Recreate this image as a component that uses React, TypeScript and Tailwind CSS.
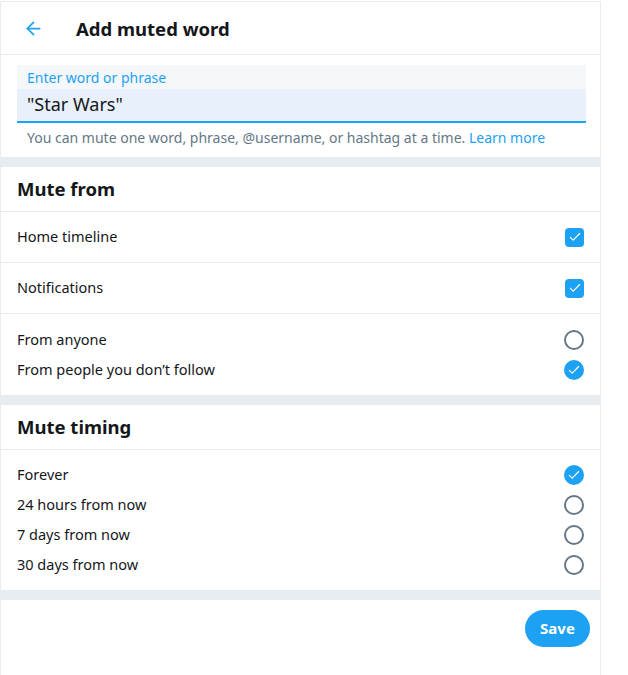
import { ArrowLeft } from 'lucide-react';

function Check() {
  return (
    <svg viewBox="0 0 24 24" className="w-[14px] h-[14px]" fill="none" stroke="white" strokeWidth="2" strokeLinecap="round" strokeLinejoin="round">
      <path d="M4 12.5l5 5L20 6" />
    </svg>
  );
}

function Checkbox() {
  return (
    <div className="w-[19px] h-[19px] rounded-[4px] bg-[#1da1f2] flex items-center justify-center">
      <Check />
    </div>
  );
}

function Radio({ checked }: { checked?: boolean }) {
  if (checked) {
    return (
      <div className="w-[20px] h-[20px] rounded-full bg-[#1da1f2] flex items-center justify-center">
        <Check />
      </div>
    );
  }
  return <div className="w-[20px] h-[20px] rounded-full border-2 border-[#657786]" />;
}

function SectionTitle({ children }: { children: string }) {
  return (
    <div className="h-[45px] px-4 flex items-center border-b border-[#e6ecf0]">
      <h2 className="text-[18.5px] font-bold text-[#14171a]">{children}</h2>
    </div>
  );
}

const timing = ['Forever', '24 hours from now', '7 days from now', '30 days from now'];

export default function App() {
  return (
    <div className="w-[628px] h-[675px] bg-white overflow-hidden" style={{ fontFamily: '"Noto Sans", "Liberation Sans", sans-serif' }}>
      <div className="w-[601px] h-[675px] mt-px border-l border-r border-t border-[#e6ecf0] text-[#14171a]">
        <div className="h-[53px] flex items-center border-b border-[#e6ecf0]">
          <div className="w-[75px] pl-[22px] flex items-center">
            <ArrowLeft className="w-[21px] h-[21px] text-[#1da1f2]" strokeWidth={2} />
          </div>
          <h1 className="text-[18.5px] font-bold leading-[26px] pt-[2px]">Add muted word</h1>
        </div>

        <div className="px-4 pt-[10px] pb-[10px]">
          <div className="w-[569px] bg-[#f5f8fa]">
            <div className="h-[24px] px-[10px] pt-[4px] text-[14px] leading-[18px] text-[#1da1f2]">Enter word or phrase</div>
            <div className="h-[34px] bg-[#e8f0fb] border-b-2 border-[#1da1f2] px-[10px] text-[18px] leading-[30px]">"Star Wars"</div>
          </div>
          <p className="mt-[6px] px-[10px] text-[14px] leading-[18px] text-[#657786]">
            You can mute one word, phrase, @username, or hashtag at a time. <span className="text-[#1da1f2]">Learn more</span>
          </p>
        </div>

        <div className="h-[10px] bg-[#e6ecf0]" />

        <SectionTitle>Mute from</SectionTitle>
        <div className="h-[51px] px-4 flex items-center justify-between border-b border-[#e6ecf0] text-[14.5px]">
          <span>Home timeline</span>
          <Checkbox />
        </div>
        <div className="h-[51px] px-4 flex items-center justify-between border-b border-[#e6ecf0] text-[14.5px]">
          <span>Notifications</span>
          <Checkbox />
        </div>
        <div className="pt-[11px] pb-[10px] text-[14.5px]">
          <div className="h-[30px] px-4 flex items-center justify-between">
            <span>From anyone</span>
            <Radio />
          </div>
          <div className="h-[30px] px-4 flex items-center justify-between">
            <span>From people you don’t follow</span>
            <Radio checked />
          </div>
        </div>

        <div className="h-[10px] bg-[#e6ecf0]" />

        <SectionTitle>Mute timing</SectionTitle>
        <div className="py-[10px] text-[14.5px]">
          {timing.map((t, i) => (
            <div key={t} className="h-[30px] px-4 flex items-center justify-between">
              <span>{t}</span>
              <Radio checked={i === 0} />
            </div>
          ))}
        </div>

        <div className="h-[10px] bg-[#e6ecf0]" />

        <div className="flex justify-end px-[10px] pt-[10px]">
          <button className="w-[65px] h-[37px] rounded-full bg-[#1da1f2] text-white text-[15px] font-bold">Save</button>
        </div>
      </div>
    </div>
  );
}
